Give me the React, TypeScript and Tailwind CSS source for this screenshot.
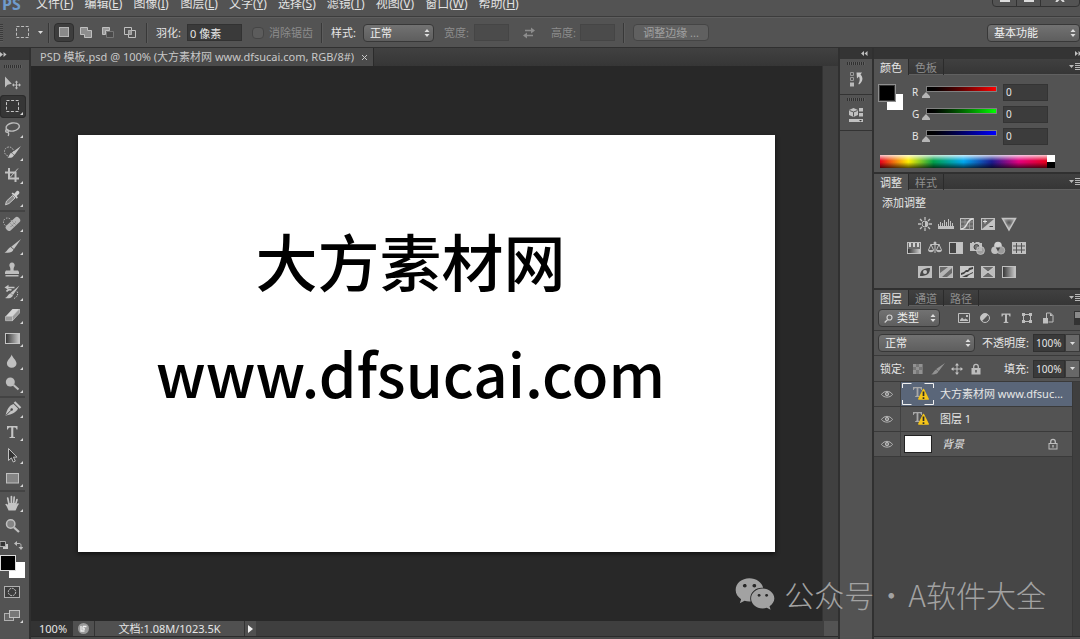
import { useState, type ReactNode } from 'react'
import { FaWeixin } from 'react-icons/fa'

const MENUS = [
  ['文件', 'F'],
  ['编辑', 'E'],
  ['图像', 'I'],
  ['图层', 'L'],
  ['文字', 'Y'],
  ['选择', 'S'],
  ['滤镜', 'T'],
  ['视图', 'V'],
  ['窗口', 'W'],
  ['帮助', 'H'],
]

type Tool = { name: string; noMenu?: boolean; art: ReactNode }

// every tool is drawn on a 24x23 grid, the size of its button
const TOOL_GROUPS: Tool[][] = [
  [
    {
      name: '移动',
      noMenu: true,
      art: (
        <>
          <path d="M5 4.5v11l2.6-2.8 4.2-.9z" fill="#bdbdbd" />
          <path d="M16.5 9.5v7M13 13h7" stroke="#bdbdbd" />
          <path d="M16.5 8.5l1.7 2h-3.4zM16.5 17.5l1.7-2h-3.4zM12 13l2-1.7v3.4zM21 13l-2-1.7v3.4z" fill="#bdbdbd" />
        </>
      ),
    },
    {
      name: '矩形选框',
      art: <rect x="6.5" y="5.5" width="12" height="11" fill="none" stroke="#c4c4c4" strokeDasharray="3 1.6" />,
    },
    {
      name: '套索',
      art: (
        <g fill="none" stroke="#bdbdbd" strokeWidth="1.4">
          <ellipse cx="12.7" cy="9" rx="6.7" ry="4" transform="rotate(-10 12.7 9)" />
          <path d="M7 11.5c-2 .5-1.600 3 .3 2.800 1.800-.2 1.400-2.400-.3-2.800M8 14.300c1 1 .8 2.500.2 3.700" />
        </g>
      ),
    },
    {
      name: '快速选择',
      art: (
        <>
          <circle cx="9" cy="10.500" r="4.500" fill="none" stroke="#bdbdbd" strokeDasharray="1.500 1.200" />
          <path d="M21 5l-6.500 9-2.800-2.300z" fill="#c8c8c8" />
          <path d="M11 11.700l3 2.500c-.8 2.200-3.500 3-6.500 2.300 1.700-.5 1.800-3.300 3.500-4.800z" fill="#c8c8c8" />
        </>
      ),
    },
    {
      name: '裁剪',
      art: (
        <>
          <path d="M9 4v10.500h10M5 8.500h10.500v9.500" fill="none" stroke="#c0c0c0" strokeWidth="2" />
          <path d="M10 13.500L18 4.500" stroke="#c0c0c0" />
        </>
      ),
    },
    {
      name: '吸管',
      art: (
        <>
          <path d="M12.500 8.500l2.500 2.500-6 5.500-3.500 1.300 1-3.700z" fill="#8a8a8a" stroke="#c8c8c8" />
          <path d="M11.500 6.500l1.300-1 1.500 1.300 2.200-2.600c1.600-1.200 3.700.8 2.600 2.500l-2.400 2.300 1.200 1.500-1.100 1.300z" fill="#d0d0d0" />
        </>
      ),
    },
  ],
  [
    {
      name: '污点修复画笔',
      art: (
        <>
          <circle cx="7.500" cy="10" r="4" fill="none" stroke="#bdbdbd" strokeDasharray="1.500 1.300" />
          <rect x="4.500" y="8.700" width="17" height="6.400" rx="2.700" transform="rotate(-43 13 12)" fill="#b8b8b8" />
          <path d="M10.500 11.500l3.500 3.500M12.500 9.500l3.500 3.500M10.500 15l5.500-5.500" stroke="#7d7d7d" strokeDasharray="1.200 1" />
        </>
      ),
    },
    {
      name: '画笔',
      art: (
        <>
          <path d="M21 4l-7 10-2.800-2.300z" fill="#c4c4c4" />
          <path d="M10.500 12l3 2.600c-1 3-5 3.800-9 2.800 2.800-.7 3-3.800 6-5.400z" fill="#c4c4c4" />
        </>
      ),
    },
    {
      name: '仿制图章',
      art: (
        <path
          d="M12 4.500a2.700 2.700 0 0 1 2.500 3.700c-.8 1.600-1 2.300-.8 4.300H18l1 1.500v2H5v-2l1-1.500h4.300c.2-2 0-2.700-.8-4.300A2.700 2.700 0 0 1 12 4.500zM5.500 17h13v1.500h-13z"
          fill="#bebebe"
        />
      ),
    },
    {
      name: '历史记录画笔',
      art: (
        <>
          <path d="M19.500 4.500l-6.500 9.500-2.500-2zM10.300 12.200l2.700 2.200c-1.300 2.800-4.900 3.400-8 2.600 2.300-.7 2.600-3.300 5.300-4.800z" fill="#c4c4c4" />
          <path d="M6.500 6.500h8M6.500 10.500c1-1.600 3-2.300 5-1.500" stroke="#c4c4c4" strokeWidth="1.600" fill="none" />
          <path d="M8.500 3.800v5L4.500 6.500z" fill="#c4c4c4" />
          <path d="M17 10.500c1.500 2.500.5 5.500-3 7" stroke="#bdbdbd" strokeDasharray="1.500 1" fill="none" />
        </>
      ),
    },
    {
      name: '橡皮擦',
      art: (
        <>
          <path d="M12.500 5h7l-7 7.500H5.500z" fill="#d5d5d5" />
          <path d="M5.500 12.500h7v4.200h-7zM12.500 12.500l7-7.500v4l-7 7.700z" fill="#9a9a9a" stroke="#c4c4c4" strokeWidth=".7" />
        </>
      ),
    },
    {
      name: '渐变',
      art: <rect x="5.500" y="6.500" width="14" height="10" fill="url(#toolRamp)" stroke="#c4c4c4" />,
    },
    {
      name: '模糊',
      art: <path d="M11.700 4.500c.8 3.300 4.800 5.700 4.800 9a4.800 4.300 0 0 1-9.600 0c0-3.300 4-5.700 4.800-9z" fill="#c0c0c0" />,
    },
    {
      name: '减淡',
      art: (
        <>
          <circle cx="10.300" cy="9" r="4.500" fill="#bdbdbd" />
          <path d="M13.500 12l5 4.500" stroke="#bdbdbd" strokeWidth="2" />
        </>
      ),
    },
  ],
  [
    {
      name: '钢笔',
      art: (
        <>
          <path d="M13.500 6l4.500 4.500c-1.800 4-5.500 5.600-12.500 7.200C7 11 9 7.700 13.500 6z" fill="#c4c4c4" />
          <path d="M14.500 4l6 6" stroke="#c4c4c4" strokeWidth="2.200" />
          <path d="M6 17.300l5-5" stroke="#4a4a4a" />
          <circle cx="11.700" cy="11.500" r="1.200" fill="#4a4a4a" />
        </>
      ),
    },
    {
      name: '横排文字',
      art: <path d="M7 5h10.500v3.500h-1c-.2-1.500-.8-2-2.500-2h-.7v8.700c0 .7.500.8 1.700.8v1H9.500v-1c1.200 0 1.700-.1 1.700-.8V6.500h-.7c-1.700 0-2.300.5-2.500 2H7z" fill="#c4c4c4" />,
    },
    {
      name: '路径选择',
      art: <path d="M8.500 4.500v12l2.900-2.600 1.900 4.100 2-.9-1.800-4h3.500z" fill="#333" stroke="#c0c0c0" />,
    },
    {
      name: '矩形',
      art: <rect x="6.500" y="6.500" width="12" height="9.500" fill="#858585" stroke="#c0c0c0" />,
    },
  ],
  [
    {
      name: '抓手',
      art: (
        <>
          <path d="M8.500 18.500c-.8-2.500-2-4.700-3.300-6.300l1.300-.5 3 2h5l3.200-2.500 1.500.6c-1.800 1.700-2.200 4.300-3.700 6.700z" fill="#c4c4c4" />
          <path d="M8 11h8v3H8z" fill="#c4c4c4" />
          <path d="M9.300 13.500L7.700 6M11.400 13V4.500M13.500 13L14.200 5M15.300 13.500l1.700-6" stroke="#c4c4c4" strokeWidth="1.700" strokeLinecap="round" />
        </>
      ),
    },
    {
      name: '缩放',
      noMenu: true,
      art: (
        <>
          <circle cx="10.700" cy="9" r="4.200" fill="#858585" stroke="#c0c0c0" strokeWidth="1.500" />
          <path d="M14 12.500l5 4.500" stroke="#c0c0c0" strokeWidth="2.300" />
        </>
      ),
    },
  ],
]

const frame = <rect x=".5" y="1.500" width="13" height="11" fill="#6a6a6a" stroke="#c0c0c0" />

const ADJUSTMENTS: { name: string; art: ReactNode }[][] = [
  [
    {
      name: '亮度/对比度',
      art: (
        <>
          <path d="M7 0v3M7 11v3M0 7h3M11 7h3M2 2l2 2M10 10l2 2M12 2l-2 2M4 10l-2 2" stroke="#c0c0c0" strokeWidth="1.300" />
          <circle cx="7" cy="7" r="3" fill="#555" stroke="#c0c0c0" />
          <path d="M7 4a3 3 0 0 1 0 6z" fill="#c0c0c0" />
        </>
      ),
    },
    {
      name: '色阶',
      art: (
        <>
          <path d="M-1 9h16v3H-1z" fill="#c0c0c0" />
          <path d="M-.5 9V7M1.500 9V5M3.500 9V6M5.500 9V3M7.500 9V5M9.500 9V2M11.500 9V4M13.500 9V6" stroke="#c0c0c0" />
        </>
      ),
    },
    {
      name: '曲线',
      art: (
        <>
          {frame}
          <path d="M5 1.500v11M9.500 1.500v11M.5 5h13M.5 9h13" stroke="#a5a5a5" strokeWidth=".7" />
          <path d="M1 12C8 12 6 2 13 2" fill="none" stroke="#e0e0e0" strokeWidth="1.500" />
        </>
      ),
    },
    {
      name: '曝光度',
      art: (
        <>
          {frame}
          <path d="M13 2v10H1z" fill="#c4c4c4" />
          <path d="M2 4.500h4M4 2.500v4" stroke="#e0e0e0" />
          <path d="M8.500 9.500h3.500" stroke="#444" />
        </>
      ),
    },
    { name: '自然饱和度', art: <path d="M.5 1.500h13L7 13z" fill="url(#vibrance)" stroke="#c4c4c4" strokeWidth="1.500" /> },
  ],
  [
    {
      name: '色相/饱和度',
      art: (
        <>
          {frame}
          <path d="M2 2h2v4H2zM6 2h2v4H6zM10 2h2v4h-2z" fill="#d0d0d0" />
          <rect x="1" y="8" width="12" height="4" fill="url(#toolRamp)" />
        </>
      ),
    },
    {
      name: '色彩平衡',
      art: (
        <>
          <path d="M7 1v11M2.500 3.500h9M3 3.500L0.500 9M3 3.500L5.500 9M11 3.500L8.500 9M11 3.500L13.500 9" fill="none" stroke="#c0c0c0" />
          <path d="M0 9h6c-.5 3-5.500 3-6 0zM8 9h6c-.5 3-5.500 3-6 0z" fill="#c0c0c0" />
          <circle cx="7" cy="2" r="1.500" fill="#c0c0c0" />
        </>
      ),
    },
    {
      name: '黑白',
      art: (
        <>
          <rect x=".5" y="1.500" width="13" height="11" fill="#444" stroke="#c0c0c0" />
          <path d="M7 2h6v10H7z" fill="#c4c4c4" />
        </>
      ),
    },
    {
      name: '照片滤镜',
      art: (
        <>
          <path d="M0 2h2V1h2v1h1l1-1h3l1 1h2v8H0z" fill="#c0c0c0" />
          <circle cx="6.500" cy="6" r="2.500" fill="#777" stroke="#444" />
          <circle cx="10.500" cy="9.500" r="4" fill="#b5b5b5" fillOpacity=".75" stroke="#d0d0d0" strokeWidth=".7" />
        </>
      ),
    },
    {
      name: '通道混合器',
      art: (
        <>
          <circle cx="7" cy="4.500" r="3.800" fill="#d0d0d0" />
          <circle cx="4" cy="9.300" r="3.800" fill="#c0c0c0" />
          <circle cx="10" cy="9.300" r="3.800" fill="#9a9a9a" stroke="#c4c4c4" strokeWidth=".7" />
          <path d="M4.800 6.500h4.400L7 10.500z" fill="#4a4a4a" />
        </>
      ),
    },
    {
      name: '颜色查找',
      art: (
        <>
          <path d="M0 1h14v12H0z" fill="#c0c0c0" />
          <path d="M4.500 2v10M9.500 2v10M1 5h12M1 9h12" stroke="#555" />
        </>
      ),
    },
  ],
  [
    {
      name: '反相',
      art: (
        <>
          <path d="M0 1h14v12H0z" fill="#bdbdbd" />
          <path d="M2 11C2 5 6 3 12 3c0 6-3 8-10 8z" fill="#4a4a4a" />
          <circle cx="7" cy="7" r="2" fill="#c4c4c4" />
        </>
      ),
    },
    {
      name: '色调分离',
      art: (
        <>
          {frame}
          <path d="M1 8L9 2h4v1L3 12H1zM8 12l5-4v4z" fill="#b5b5b5" />
        </>
      ),
    },
    {
      name: '阈值',
      art: (
        <>
          <path d="M0 1h14v12H0z" fill="#c8c8c8" />
          <path d="M1 8l3-1 2-2 2 0 1-2 4-1v2l-3 1-2 2-2 0-2 2-3 1zM2 12l4-2 3-1 4-2v1l-4 2-2 2z" fill="#3f3f3f" />
        </>
      ),
    },
    {
      name: '可选颜色',
      art: (
        <>
          {frame}
          <path d="M1 2l6 5-6 5zM13 2L7 7l6 5z" fill="#bdbdbd" />
          <path d="M1 2l6 5 6-5M1 12l6-5 6 5" fill="none" stroke="#ddd" strokeWidth=".7" />
        </>
      ),
    },
    {
      name: '渐变映射',
      art: <rect x=".5" y="1.500" width="13" height="11" fill="url(#toolRamp)" stroke="#c0c0c0" />,
    },
  ],
]

const CHANNELS = [
  { id: 'R', ramp: 'bg-linear-to-r from-black to-[#ff0000]' },
  { id: 'G', ramp: 'bg-linear-to-r from-black to-[#00ff00]' },
  { id: 'B', ramp: 'bg-linear-to-r from-black to-[#0000ff]' },
]

const LAYERS = [
  { id: 'title', name: '大方素材网 www.dfsuc...', kind: 'text' },
  { id: 'layer1', name: '图层 1', kind: 'text' },
  { id: 'bg', name: '背景', kind: 'background' },
]

function SharedGradients() {
  return (
    <svg className="absolute size-0" aria-hidden="true">
      <defs>
        <linearGradient id="toolRamp">
          <stop offset="0" stopColor="#333" />
          <stop offset="1" stopColor="#ccc" />
        </linearGradient>
        <radialGradient id="vibrance" cy=".35">
          <stop offset="0" stopColor="#555" />
          <stop offset="1" stopColor="#b0b0b0" />
        </radialGradient>
      </defs>
    </svg>
  )
}

function Divider() {
  return <div className="h-5 w-0.5 shrink-0 border-l border-[#383838] bg-[#5c5c5c]" />
}

function Grip() {
  return <div className="h-[3px] w-[18px] bg-[repeating-linear-gradient(90deg,#303030_0_1px,#5e5e5e_1px_2px)]" />
}

function DarkSelect({ label, value, className, indent = 'pl-1.5' }: { label: string; value: string; className: string; indent?: string }) {
  return (
    <div className={`relative shrink-0 ${className}`}>
      <select
        aria-label={label}
        defaultValue={value}
        className={`block h-[18px] w-full appearance-none rounded-sm border border-[#383838] bg-linear-to-b from-[#727272] to-[#5e5e5e] pr-3 leading-4 text-[#f0f0f0] outline-none ${indent}`}
      >
        <option>{value}</option>
      </select>
      <svg viewBox="0 0 6 8" className="pointer-events-none absolute top-[5px] right-1 h-2 w-1.5" fill="#dedede">
        <path d="M3 0l2.500 3h-5zM3 8l2.500-3h-5z" />
      </svg>
    </div>
  )
}

function PanelTabs({ tabs }: { tabs: string[] }) {
  return (
    <div className="flex h-4 shrink-0 border-b border-[#606060] bg-linear-to-b from-[#404040] to-[#363636]" role="tablist">
      {tabs.map((tab, i) => (
        <button
          key={tab}
          type="button"
          role="tab"
          aria-selected={i === 0}
          className={`h-4 border-r border-[#2b2b2b] px-1.5 leading-[15px] ${i === 0 ? 'bg-[#535353] text-[#e6e6e6]' : 'text-[#8f8f8f]'}`}
        >
          {tab}
        </button>
      ))}
      <button type="button" aria-label="面板菜单" className="ml-auto">
        <svg viewBox="0 0 11 10" className="h-2.5 w-[11px]" fill="#b8b8b8">
          <path d="M0 3h5L2.500 6zM6 1h5v1H6zM6 3h5v1H6zM6 5h5v1H6zM6 7h5v1H6z" />
        </svg>
      </button>
    </div>
  )
}

function MenuBar() {
  return (
    <header className="-mt-[5px] flex h-[22px] shrink-0 items-start border-b border-[#3c3c3c] text-xs leading-[18px] text-[#e2e2e2]">
      <span className="w-[30px] pl-0.5 text-base leading-[18px] font-bold text-[#6f9bcb]">PS</span>
      <nav className="flex gap-[11px] pl-1.5">
        {MENUS.map(([label, key]) => (
          <button key={key} type="button" className="min-w-9 text-left whitespace-nowrap">
            {label}
            <span>
              (<u>{key}</u>)
            </span>
          </button>
        ))}
      </nav>
      <div className="ml-auto flex h-3 rounded-b-sm border border-[#333] text-[#dcdcdc]">
        <button type="button" aria-label="最小化" className="flex w-6 items-end justify-center border-r border-[#333] pb-1">
          <span className="h-[3px] w-2.5 bg-[#dcdcdc]" />
        </button>
        <button type="button" aria-label="还原" className="flex w-6 items-end justify-center border-r border-[#333] pb-1">
          <span className="h-[3px] w-2.5 bg-[#dcdcdc]" />
        </button>
        <button type="button" aria-label="关闭" className="flex w-[38px] items-end justify-center pb-1">
          <svg viewBox="0 0 10 8" className="h-2 w-2.5" stroke="#dcdcdc" strokeWidth="2">
            <path d="M1 0l8 8M9 0L1 8" />
          </svg>
        </button>
      </div>
    </header>
  )
}

function OptionsBar() {
  const modes = [
    { name: '新选区', art: <rect x="2.500" y="1.500" width="9" height="9" fill="#8a8a8a" stroke="#b5b5b5" /> },
    {
      name: '添加到选区',
      art: <path d="M1.500 1.500h7v3h4v7h-7v-3h-4z" fill="#8e8e8e" stroke="#c0c0c0" />,
    },
    {
      name: '从选区减去',
      art: (
        <>
          <path d="M1.500 1.500h7v3h-4v4h-3z" fill="#9a9a9a" stroke="#c0c0c0" />
          <path d="M5.500 5.500h7v6h-7z" fill="#4a4a4a" stroke="#777" />
        </>
      ),
    },
    {
      name: '与选区交叉',
      art: (
        <>
          <path d="M1.500 1.500h7v7h-7zM5.500 4.500h7v7h-7z" fill="none" stroke="#c0c0c0" />
          <path d="M5.500 4.500h3v4h-3z" fill="#9a9a9a" />
        </>
      ),
    },
  ]
  return (
    <section className="flex h-[30px] shrink-0 items-center border-t border-[#5e5e5e] text-[#e6e6e6]">
      <div className="h-[18px] w-[3px] shrink-0 bg-[repeating-linear-gradient(180deg,#3a3a3a_0_1px,#5c5c5c_1px_2px)]" />
      <button type="button" aria-label="当前工具" className="ml-3 flex w-8 shrink-0 items-center gap-2">
        <svg viewBox="0 0 15 13" className="h-[13px] w-[15px]">
          <rect x="1.500" y=".5" width="12" height="11" fill="none" stroke="#bdbdbd" strokeDasharray="3 1.600" />
        </svg>
        <svg viewBox="0 0 5 3" className="h-[3px] w-[5px]" fill="#ddd">
          <path d="M0 0h5L2.500 3z" />
        </svg>
      </button>
      <div className="ml-px">
        <Divider />
      </div>
      <div className="ml-1 flex w-[92px] shrink-0 gap-0.5">
        {modes.map((mode, i) => (
          <button
            key={mode.name}
            type="button"
            aria-label={mode.name}
            className={`flex h-[19px] w-5 items-center justify-center rounded-sm ${i === 0 ? 'border border-[#2e2e2e] bg-[#3d3d3d]' : ''}`}
          >
            <svg viewBox="0 0 14 13" className="h-[13px] w-3.5 shrink-0">
              {mode.art}
            </svg>
          </button>
        ))}
      </div>
      <Divider />
      <label htmlFor="feather" className="ml-2 w-[31px] shrink-0 whitespace-nowrap">
        羽化:
      </label>
      <input id="feather" defaultValue="0 像素" className="h-[17px] w-[55px] shrink-0 border border-[#323232] bg-[#3a3a3a] px-0.5 outline-none" />
      <label className="ml-2.5 flex w-[69px] shrink-0 items-center gap-[5px] whitespace-nowrap text-[#8c8c8c]">
        <input type="checkbox" disabled className="size-3 shrink-0 appearance-none rounded-sm border border-[#454545] bg-[#5c5c5c]" />
        消除锯齿
      </label>
      <Divider />
      <span className="ml-2 w-8 shrink-0 whitespace-nowrap">样式:</span>
      <DarkSelect label="样式" value="正常" className="w-[71px]" />
      <label htmlFor="fixedWidth" className="ml-2.5 w-[30px] shrink-0 whitespace-nowrap text-[#8c8c8c]">
        宽度:
      </label>
      <input id="fixedWidth" disabled className="h-[17px] w-[35px] shrink-0 border border-[#454545] bg-[#4b4b4b]" />
      <button type="button" aria-label="交换宽度和高度" className="mr-4 ml-3.5 shrink-0">
        <svg viewBox="0 0 12 12" className="size-3" fill="#8c8c8c" stroke="#8c8c8c">
          <path d="M2 3.500h6M4 8.500h6" strokeWidth="1.500" />
          <path d="M8 .5l4 3-4 3zM4 5.500l-4 3 4 3z" stroke="none" />
        </svg>
      </button>
      <label htmlFor="fixedHeight" className="w-[29px] shrink-0 whitespace-nowrap text-[#8c8c8c]">
        高度:
      </label>
      <input id="fixedHeight" disabled className="mr-2 h-[17px] w-[35px] shrink-0 border border-[#454545] bg-[#4b4b4b]" />
      <Divider />
      <button type="button" className="ml-2 h-[17px] w-[76px] shrink-0 rounded-sm border border-[#454545] bg-[#606060] leading-[15px] whitespace-nowrap text-[#a0a0a0]">
        调整边缘 ...
      </button>
      <div className="ml-auto">
        <DarkSelect label="工作区" value="基本功能" className="w-[93px]" />
      </div>
    </section>
  )
}

function ToolBar() {
  const [active, setActive] = useState('矩形选框')
  return (
    <aside className="flex w-[31px] shrink-0 flex-col border-r-2 border-[#303030]">
      <div className="flex h-3 items-center bg-[#363636]">
        <svg viewBox="0 0 7 5" className="h-[5px] w-[7px]" fill="#c0c0c0">
          <path d="M0 0l3 2.500L0 5zM3.500 0l3 2.500-3 2.500z" />
        </svg>
      </div>
      <div className="flex h-3 items-center pl-1">
        <Grip />
      </div>
      {TOOL_GROUPS.map((group, i) => (
        <div key={i} className={i < TOOL_GROUPS.length - 1 ? 'mr-1 border-b-2 border-[#434343]' : 'mr-1'}>
          {group.map((tool) => (
            <button
              key={tool.name}
              type="button"
              aria-label={tool.name}
              onClick={() => setActive(tool.name)}
              className={`block h-[23px] w-[26px] ${tool.name === active ? 'rounded-sm bg-[#363636] shadow-[inset_0_0_0_1px_#2b2b2b]' : ''}`}
            >
              <svg viewBox="0 0 24 23" className="h-[23px] w-6">
                {tool.art}
                {!tool.noMenu && <path d="M23 17v3h-3z" fill="#d6d6d6" />}
              </svg>
            </button>
          ))}
        </div>
      ))}
      <div className="flex h-[15px] items-center justify-between pr-1.5">
        <button type="button" aria-label="默认颜色">
          <svg viewBox="0 0 9 9" className="size-[9px]">
            <path d="M3 3h5v5H3z" fill="#c8c8c8" />
            <path d="M0 .5h5.500v5H0z" fill="#333" stroke="#aaa" />
          </svg>
        </button>
        <button type="button" aria-label="切换前景色和背景色">
          <svg viewBox="0 0 9 9" className="size-[9px]">
            <path d="M2 2.500h3c1.500 0 2 .5 2 2V6" fill="none" stroke="#bdbdbd" />
            <path d="M0 2.500L3 0v5zM7 9L4.500 6h5z" fill="#bdbdbd" />
          </svg>
        </button>
      </div>
      <div className="relative h-[27px]">
        <span className="absolute right-1 bottom-0.5 size-4 bg-white" />
        <span className="absolute top-0.5 left-0 size-4 border border-[#dcdcdc] bg-black" />
      </div>
      <button type="button" aria-label="快速蒙版" className="h-6">
        <svg viewBox="0 0 24 24" className="size-6">
          <rect x="4.500" y="6.500" width="15" height="11" fill="#3c3c3c" stroke="#b0b0b0" />
          <circle cx="12" cy="12" r="3.700" fill="none" stroke="#c0c0c0" strokeDasharray="2 .8" />
        </svg>
      </button>
      <button type="button" aria-label="屏幕模式" className="h-6">
        <svg viewBox="0 0 24 24" className="size-6">
          <rect x="4.500" y="9.500" width="9" height="7" fill="#666" stroke="#b0b0b0" />
          <rect x="9.500" y="6.500" width="10" height="7" fill="#777" stroke="#c0c0c0" />
          <path d="M23 16v3h-3z" fill="#d6d6d6" />
        </svg>
      </button>
    </aside>
  )
}

function DocumentArea() {
  return (
    <main className="flex min-w-0 flex-1 flex-col">
      <div className="flex h-[18px] shrink-0 bg-linear-to-b from-[#414141] to-[#363636]">
        <div className="flex items-center gap-2 border-r border-[#2b2b2b] bg-[#4b4b4b] pr-1.5 pl-[9px] whitespace-nowrap text-[#c8c8c8]">
          <span>PSD 模板.psd @ 100% (大方素材网 www.dfsucai.com, RGB/8#)</span>
          <button type="button" aria-label="关闭文档">
            <svg viewBox="0 0 5 5" className="size-[5px]" stroke="#c8c8c8">
              <path d="M0 0l5 5M5 0L0 5" />
            </svg>
          </button>
        </div>
      </div>
      <div className="flex min-h-0 flex-1">
        <div className="flex min-w-0 flex-1 items-center justify-center bg-[#282828]">
          <div className="flex aspect-[5/3] w-[88%] flex-col items-center bg-white pt-[83px] pr-8 font-['Noto_Sans_CJK_SC',sans-serif] font-medium whitespace-nowrap text-black shadow-[0_2px_4px_#111]">
            <p className="text-[62px] leading-[84px]">大方素材网</p>
            <p className="mt-7 text-[60px] leading-[84px]">www.dfsucai.com</p>
          </div>
        </div>
        <div className="w-4 shrink-0 border-l border-[#333] bg-[#404040]" />
      </div>
      <div className="flex h-[15px] shrink-0 items-stretch bg-[#3f3f3f] text-[#e6e6e6]">
        <input aria-label="缩放比例" defaultValue="100%" className="w-[42px] bg-[#333] pl-2 outline-none" />
        <button type="button" aria-label="导出" className="flex w-[22px] items-center justify-center border-r border-[#333] bg-[#505050]">
          <svg viewBox="0 0 11 11" className="size-[11px]">
            <circle cx="5.500" cy="5.500" r="5.500" fill="#9a9a9a" />
            <path d="M3 3v5h3.500M5 3.500h3.500M5 3.500V6h2" fill="none" stroke="#eee" strokeWidth="1.300" />
          </svg>
        </button>
        <span className="w-[149px] bg-[#505050] text-center leading-[15px]">文档:1.08M/1023.5K</span>
        <button type="button" aria-label="状态选项" className="flex w-3 items-center justify-center border-l border-[#333] bg-[#505050]">
          <svg viewBox="0 0 5 8" className="h-2 w-[5px]" fill="#f0f0f0">
            <path d="M0 0l5 4-5 4z" />
          </svg>
        </button>
        <div className="ml-auto w-3.5 bg-[#535353]" />
      </div>
      <div className="h-[3px] shrink-0 border-t border-[#2b2b2b] bg-[#4a4a4a]" />
    </main>
  )
}

function IconDock() {
  return (
    <div className="flex w-9 shrink-0 flex-col border-x-2 border-[#303030]">
      <div className="flex h-[11px] items-center justify-end bg-[#343434] pr-1">
        <svg viewBox="0 0 7 5" className="h-[5px] w-[7px]" fill="#c0c0c0">
          <path d="M3 0L0 2.500 3 5zM6.500 0l-3 2.500 3 2.500z" />
        </svg>
      </div>
      <button type="button" aria-label="历史记录" className="flex h-9 flex-col items-center gap-1.5 border-b border-[#333] pt-[3px]">
        <Grip />
        <svg viewBox="0 0 14 17" className="h-[17px] w-3.5">
          <path d="M1.500 1.500h3v3h-3zM1.500 6.500h3v3h-3z" fill="none" stroke="#999" />
          <path d="M1 11.500h4v4H1z" fill="#b8b8b8" />
          <path d="M7.500 1.500h5.500l-1.500 2c3 3 2.500 7-1.500 10-.5-.5-.5-.5-.5-1 1.500-2.500 1.500-4.500.5-7L8 7.500z" fill="#c8c8c8" />
        </svg>
      </button>
      <button type="button" aria-label="属性" className="flex h-9 flex-col items-center gap-1.5 border-b border-[#333] pt-[3px]">
        <Grip />
        <svg viewBox="0 0 14 17" className="h-[17px] w-3.5">
          <path d="M4.500 1L9 3v5l-4.500 2L0 8V3z" fill="#c0c0c0" />
          <path d="M.5 3.500L4.500 5l4-1.500M4.500 5v4.500" stroke="#555" fill="none" />
          <path d="M10 1h4v3.500h-4zM10 6h4v3.500h-4zM0 12h14v3H0z" fill="#c0c0c0" />
          <path d="M10 13h3l-1.500 1.500z" fill="#333" />
        </svg>
      </button>
    </div>
  )
}

function ColorPanel() {
  return (
    <section className="border-b-2 border-[#303030]">
      <PanelTabs tabs={['颜色', '色板']} />
      <div className="flex h-[72px] pt-1.5">
        <div className="relative mt-[3px] ml-1 h-[26px] w-[27px] shrink-0">
          <span className="absolute right-0.5 bottom-0 size-4 bg-white" />
          <span className="absolute top-0 left-0 size-[18px] border-2 border-[#8f8f8f] bg-black outline-1 outline-[#333] -outline-offset-2" />
        </div>
        <div className="ml-[7px]">
          {CHANNELS.map((channel) => (
            <div key={channel.id} className="flex h-[22px] items-center">
              <label htmlFor={`slider${channel.id}`} className="w-2.5 text-[10px]">
                {channel.id}
              </label>
              <div className="w-[79px]">
                <div className={`mx-1 h-1.5 border border-[#808080] ${channel.ramp}`} />
                <input
                  id={`slider${channel.id}`}
                  type="range"
                  min={0}
                  max={255}
                  defaultValue={0}
                  className="block h-1.5 w-full appearance-none bg-transparent [&::-webkit-slider-thumb]:h-1.5 [&::-webkit-slider-thumb]:w-2 [&::-webkit-slider-thumb]:appearance-none [&::-webkit-slider-thumb]:bg-[#b5b5b5] [&::-webkit-slider-thumb]:[clip-path:polygon(50%_0,100%_70%,100%_100%,0_100%,0_70%)]"
                />
              </div>
              <input
                aria-label={`${channel.id} 值`}
                defaultValue="0"
                className="ml-0.5 h-[17px] w-[45px] border border-[#343434] bg-[#3c3c3c] px-0.5 text-[10px] outline-none"
              />
            </div>
          ))}
        </div>
      </div>
      <div className="mt-2 mr-[25px] mb-1 ml-1.5 flex h-[13px]">
        <div className="flex-1 bg-[linear-gradient(180deg,#fffc_0%,#fff0_45%,#0000_55%,#000a_100%),linear-gradient(90deg,#e8001c,#ffef00_17%,#00a04a_32%,#00a8f0_50%,#1b1b8f_67%,#e4007f_83%,#e8001c)]" />
        <div className="w-2 bg-linear-to-b from-white from-50% to-black to-50%" />
      </div>
    </section>
  )
}

function AdjustmentsPanel() {
  return (
    <section className="border-b-2 border-[#303030]">
      <PanelTabs tabs={['调整', '样式']} />
      <h2 className="pt-[5px] pl-2 leading-4">添加调整</h2>
      <div className="space-y-0.5 pt-0.5 pr-[21px] pb-[5px]">
        {ADJUSTMENTS.map((row, i) => (
          <div key={i} className="flex h-[22px] justify-center">
            {row.map((item) => (
              <button key={item.name} type="button" aria-label={item.name} className="flex w-[21px] items-center justify-center">
                <svg viewBox="0 0 14 14" className="size-3.5 overflow-visible">
                  {item.art}
                </svg>
              </button>
            ))}
          </div>
        ))}
      </div>
    </section>
  )
}

function PercentField({ id, label }: { id: string; label: string }) {
  return (
    <div className="ml-auto flex shrink-0 items-center">
      <label htmlFor={id} className="mr-1 whitespace-nowrap">
        {label}:
      </label>
      <input id={id} defaultValue="100%" className="h-[18px] w-8 border border-[#303030] bg-[#3a3a3a] px-0.5 text-[10px] outline-none" />
      <button type="button" aria-label={`${label}滑块`} className="flex h-[18px] w-[15px] items-center justify-center border border-[#3a3a3a] bg-[#686868]">
        <svg viewBox="0 0 5 3" className="h-[3px] w-[5px]" fill="#ddd">
          <path d="M0 0h5L2.500 3z" />
        </svg>
      </button>
    </div>
  )
}

function EyeIcon() {
  return (
    <svg viewBox="0 0 12 8" className="h-2 w-3">
      <path d="M.5 4.500C3 .3 9 .3 11.500 4.500 9 8 3 8 .5 4.500z" fill="#555" stroke="#b5b5b5" />
      <circle cx="6" cy="4" r="2" fill="#c8c8c8" />
      <circle cx="6" cy="4" r=".8" fill="#333" />
    </svg>
  )
}

function TextThumb({ selected }: { selected: boolean }) {
  return (
    <svg viewBox="0 0 32 22" className="h-[22px] w-8">
      {selected && <path d="M.5 5V.5h9M22.500.5h9V5M.5 17v4.500h9M22.500 21.500h9V17" fill="none" stroke="#f0f0f0" />}
      <path d="M11 4h9v3h-.8c-.2-1.300-.7-1.800-2-1.800h-.8v7c0 .6.300.8 1.400.8v1h-4.600v-1c1.100 0 1.400-.2 1.400-.8v-7h-.8c-1.300 0-1.800.5-2 1.800H11z" fill="#a8a8a8" />
      <path d="M21.500 6.500l4.700 9.500h-9.400z" fill="#f5c518" stroke="#f5c518" strokeWidth="1.500" strokeLinejoin="round" />
      <path d="M21.500 8.500v4.500M21.500 14.300v1.700" stroke="#2b2b2b" strokeWidth="1.700" />
    </svg>
  )
}

function LockIcon({ hollow }: { hollow?: boolean }) {
  return (
    <svg viewBox="0 0 10 12" className="h-3 w-2.5">
      <path d="M2.700 5.500V3.700a2.300 2.300 0 0 1 4.600 0v1.800" fill="none" stroke="#bdbdbd" strokeWidth="1.300" />
      <rect x="1" y="5.500" width="8" height="5.500" fill={hollow ? '#555' : '#bdbdbd'} stroke="#bdbdbd" />
      <path d="M5 7v2.500" stroke={hollow ? '#bdbdbd' : '#444'} strokeWidth="1.300" />
    </svg>
  )
}

function LayersPanel() {
  const [selected, setSelected] = useState('title')
  const filters = [
    {
      name: '像素图层',
      art: (
        <>
          <path d="M.5 1.500h11v9H.5z" fill="#555" stroke="#c0c0c0" />
          <path d="M2 9V8l2-2.500L6 7.500l1.500-1L10 8v1zM8 3h2v2H8z" fill="#c0c0c0" />
        </>
      ),
    },
    {
      name: '调整图层',
      art: (
        <>
          <circle cx="6" cy="6" r="4.500" fill="#555" stroke="#c0c0c0" />
          <path d="M9.200 2.800a4.500 4.500 0 0 0-6.400 6.400z" fill="#c4c4c4" />
        </>
      ),
    },
    {
      name: '文字图层',
      art: <path d="M1.500 1.500h9v3h-1c-.2-1.200-.6-1.700-1.800-1.700H7v6.500c0 .6.300.7 1.300.7v1H3.700v-1c1 0 1.300-.1 1.300-.7V2.800h-.7c-1.200 0-1.600.5-1.800 1.700h-1z" fill="#bdbdbd" />,
    },
    {
      name: '形状图层',
      art: (
        <>
          <path d="M2.500 2.500h7v7h-7z" fill="none" stroke="#bdbdbd" />
          <path d="M1 1h3v3H1zM8 1h3v3H8zM1 8h3v3H1zM8 8h3v3H8z" fill="#bdbdbd" />
        </>
      ),
    },
    {
      name: '智能对象',
      art: (
        <>
          <path d="M4.500 6V1h4l2.500 2.500V10H6.500" fill="none" stroke="#bdbdbd" />
          <path d="M8 1v3h3zM1 6h5v5.500H1z" fill="#c0c0c0" />
        </>
      ),
    },
  ]
  return (
    <section className="flex min-h-0 flex-1 flex-col">
      <PanelTabs tabs={['图层', '通道', '路径']} />
      <div className="flex h-[25px] shrink-0 items-center border-b border-[#3a3a3a] pl-1">
        <div className="relative">
          <DarkSelect label="图层过滤" value="类型" className="w-[62px]" indent="pl-[18px]" />
          <svg viewBox="0 0 9 9" className="pointer-events-none absolute top-[5px] left-1.5 size-[9px]" fill="none" stroke="#d0d0d0" strokeWidth="1.200">
            <circle cx="5.500" cy="3.500" r="2.500" />
            <path d="M3.700 5.500L.7 8.500" />
          </svg>
        </div>
        <div className="ml-[18px] flex gap-[9px]">
          {filters.map((filter) => (
            <button key={filter.name} type="button" aria-label={filter.name}>
              <svg viewBox="0 0 12 12" className="block size-3">
                {filter.art}
              </svg>
            </button>
          ))}
        </div>
        <button type="button" aria-label="打开图层过滤" className="ml-auto h-3.5 w-1.5 border border-r-0 border-[#333] bg-linear-to-b from-[#8a8a8a] from-50% to-[#333] to-50%" />
      </div>
      <div className="flex h-[25px] shrink-0 items-center border-b border-[#3a3a3a] pl-1">
        <DarkSelect label="混合模式" value="正常" className="w-[97px]" />
        <PercentField id="opacity" label="不透明度" />
      </div>
      <div className="flex h-[26px] shrink-0 items-center border-b border-[#3a3a3a] pl-1.5">
        <span className="w-[31px] whitespace-nowrap">锁定:</span>
        <div className="flex items-center gap-1.5">
          <button type="button" aria-label="锁定透明像素">
            <svg viewBox="0 0 14 12" className="block h-3 w-3.5">
              <path d="M2 1h10v10H2z" fill="#777" />
              <path d="M2 1h3v3H2zM8 1h3v3H8zM5 4h3v3H5zM2 7h3v4H2zM8 7h3v4H8z" fill="#929292" />
            </svg>
          </button>
          <button type="button" aria-label="锁定图像像素">
            <svg viewBox="0 0 14 12" className="block h-3 w-3.5" fill="#929292">
              <path d="M14 0L7.700 8.200 5.200 6zM5 6.500l2.500 2c-1 2.500-4.500 3.300-7.500 2.800 2.500-.7 2.700-3.500 5-4.800z" />
            </svg>
          </button>
          <button type="button" aria-label="锁定位置">
            <svg viewBox="0 0 12 12" className="block size-3">
              <path d="M6 1v10M1 6h10" stroke="#c4c4c4" />
              <path d="M6 0l2 2.500H4zM6 12l2-2.500H4zM0 6l2.500-2v4zM12 6L9.500 4v4z" fill="#c4c4c4" />
            </svg>
          </button>
          <button type="button" aria-label="锁定全部" className="ml-0.5">
            <LockIcon />
          </button>
        </div>
        <PercentField id="fill" label="填充" />
      </div>
      <div className="flex min-h-0 flex-1 bg-[#464646]">
        <ul className="min-w-0 flex-1">
          {LAYERS.map((layer) => {
            const isSelected = layer.id === selected
            return (
              <li
                key={layer.id}
                onClick={() => setSelected(layer.id)}
                className={`flex h-[25px] items-center border-b border-[#3a3a3a] ${isSelected ? 'bg-[#5a6679]' : 'bg-[#535353]'}`}
              >
                <button type="button" aria-label="显示图层" className="flex h-6 w-[27px] shrink-0 items-center justify-center border-r border-[#404040] bg-[#535353]">
                  <EyeIcon />
                </button>
                <div className="ml-px flex w-[38px] shrink-0">
                  {layer.kind === 'text' ? <TextThumb selected={isSelected} /> : <span className="ml-0.5 h-[18px] w-7 border border-[#222] bg-white" />}
                </div>
                <span className={layer.kind === 'background' ? 'pl-0.5 whitespace-nowrap italic' : 'whitespace-nowrap'}>{layer.name}</span>
                {layer.kind === 'background' && (
                  <span className="mr-3.5 ml-auto">
                    <LockIcon hollow />
                  </span>
                )}
              </li>
            )
          })}
        </ul>
        <div className="w-2 shrink-0 border-l border-[#383838] bg-[#3f3f3f]" />
      </div>
      <div className="h-[3px] shrink-0 border-t border-[#2b2b2b] bg-[#535353]" />
    </section>
  )
}

export default function App() {
  return (
    <div className="relative flex h-screen flex-col overflow-hidden bg-[#535353] font-['Noto_Sans','Noto_Sans_CJK_SC',sans-serif] text-[11px] leading-4 text-[#e6e6e6]">
      <SharedGradients />
      <MenuBar />
      <OptionsBar />
      <div className="flex min-h-0 flex-1 border-t border-[#303030]">
        <ToolBar />
        <DocumentArea />
        <IconDock />
        <aside className="flex w-[206px] shrink-0 flex-col">
          <div className="flex h-[11px] shrink-0 items-center justify-end bg-[#343434]">
            <svg viewBox="0 0 5 5" className="size-[5px]" fill="#c0c0c0">
              <path d="M0 0l3 2.500L0 5zM3.500 0L5 1.200v2.600L3.500 5z" />
            </svg>
          </div>
          <ColorPanel />
          <AdjustmentsPanel />
          <LayersPanel />
        </aside>
      </div>
      <div className="pointer-events-none absolute right-[34px] bottom-[25px] flex items-center font-['Noto_Sans_CJK_SC',sans-serif] text-[30px] leading-10 font-light whitespace-nowrap text-[#a2a2a2]">
        <FaWeixin className="mr-2 h-9 w-[42px]" />
        <span>公众号</span>
        <span className="w-[34px] text-center">·</span>
        <span>A软件大全</span>
      </div>
    </div>
  )
}
